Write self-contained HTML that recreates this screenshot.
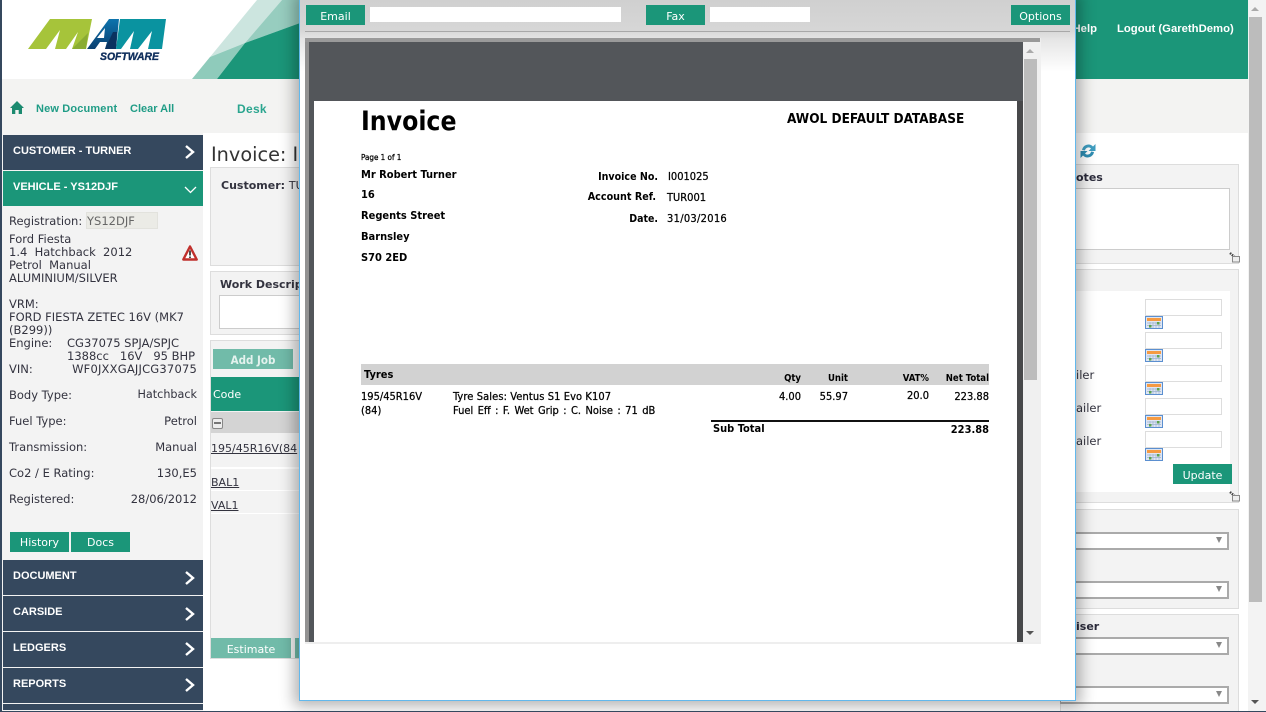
<!DOCTYPE html>
<html><head><meta charset="utf-8"><title>Invoice</title>
<style>
html,body{margin:0;padding:0;width:1266px;height:712px;overflow:hidden;background:#fff}
body{position:relative;font-family:"DejaVu Sans","Liberation Sans",sans-serif;font-size:11.5px;color:#33333f}
.a,.t{position:absolute}
.t{white-space:nowrap;line-height:14px;margin-top:1px}
.nav{position:absolute;left:3px;width:200px;height:35px;background:#35485e}
.nl{position:absolute;left:10px;font:bold 11px/14px "Liberation Sans",sans-serif;color:#fff;white-space:nowrap}
.btn{position:absolute;background:#1b9679;color:#fff;text-align:center;font-size:11px;line-height:22px;height:20px;overflow:hidden}
.r{position:absolute;background:#fff;border:1px solid #ddd;box-sizing:border-box}
.i{font-family:"DejaVu Sans Condensed","DejaVu Sans",sans-serif;font-weight:bold;color:#000;position:absolute;white-space:nowrap;line-height:14px;font-size:11px;margin-top:1px}
.n{font-weight:normal;-webkit-text-stroke:.25px #000}
.sel{position:absolute;left:1060px;width:169px;height:18px;background:#fff;border:1px solid #aaa;border-width:2px 2px 2px 1px;box-sizing:border-box}
.sel:after{content:"";position:absolute;right:5px;top:3px;border:3.5px solid transparent;border-top:6px solid #888}
u{text-decoration:underline}
</style></head><body>

<!-- header -->
<div class="a" style="left:0;top:0;width:1248px;height:79px;background:#fff"></div>
<svg class="a" style="left:0;top:0" width="1248" height="80">
<defs><linearGradient id="bl" x1="0" y1="0" x2="0" y2="1"><stop offset="0" stop-color="#0d74ad"/><stop offset="1" stop-color="#0a3f70"/></linearGradient></defs>
<polygon points="210,57 257,0 282,0 245,43" fill="#cce5df"/>
<polygon points="245,43 282,0 300,0 300,23" fill="#97cdbf"/>
<polygon points="192,79 210,57 245,43 217,79" fill="#8fcbbb"/>
<polygon points="217,79 245,43 300,23 300,79" fill="#1b9679"/>
<rect x="300" y="0" width="948" height="79" fill="#1b9679"/>
<!-- logo -->
<polygon points="28,49 50,19 92,19 86,49 72,49 78,32 66,49 55,49 60,30 46,49" fill="#a6c43a"/>
<polygon points="72,49 88,33 86,49" fill="#8aac33"/>
<polygon points="87,49 109,19 119,19 116,49 105,49 107,42 100,42 95,49" fill="url(#bl)"/>
<polygon points="97,38 105,28 104,38" fill="#fff"/>
<polygon points="105,49 113,32 117,32 116,49" fill="#0a3260"/>
<polygon points="116,49 120,19 166,19 162,49 148,49 152,31 138,49 130,49 134,31 121,49" fill="#0a93a0"/>
<text x="100" y="60" font-family="Liberation Sans" font-size="11" font-weight="bold" font-style="italic" fill="#0f2e5c" stroke="#0f2e5c" stroke-width=".35" textLength="59" lengthAdjust="spacingAndGlyphs">SOFTWARE</text>
</svg>
<div class="t" style="left:1117px;top:21px;color:#fff;font:bold 11.3px/14px 'Liberation Sans',sans-serif">Logout (GarethDemo)</div>
<div class="t" style="right:169px;top:21px;color:#fff;font:bold 11.3px/14px 'Liberation Sans',sans-serif">Help</div>

<!-- subnav -->
<div class="a" style="left:0;top:79px;width:1248px;height:54px;background:#f3f3f2"></div>
<svg class="a" style="left:10px;top:101px" width="15" height="14"><path d="M7 0 L14 7 L12 7 L12 13 L8.7 13 L8.7 9 L5.3 9 L5.3 13 L2 13 L2 7 L0 7 Z" fill="#1b8a70"/></svg>
<div class="t" style="left:36px;top:101px;color:#1f9c86;font:bold 11px/14px 'Liberation Sans',sans-serif;letter-spacing:.15px">New Document</div>
<div class="t" style="left:130px;top:101px;color:#1f9c86;font:bold 11px/14px 'Liberation Sans',sans-serif">Clear All</div>
<div class="t" style="left:237px;top:101px;color:#2aa58f;font:bold 12px/14px 'Liberation Sans',sans-serif;letter-spacing:.3px">Desk</div>

<!-- sidebar -->
<div class="a" style="left:0;top:0;width:2px;height:712px;background:#35485e;z-index:5"></div>
<div class="a" style="left:0;top:711px;width:1266px;height:1px;background:#35485e;z-index:5"></div>
<div class="a" style="left:2px;top:133px;width:201px;height:578px;background:#f3f3f3"></div>
<div class="nav" style="top:135px"><div class="nl" style="top:9px">CUSTOMER - TURNER</div></div>
<div class="nav" style="top:171px;background:#1b9679"><div class="nl" style="top:9px">VEHICLE - YS12DJF</div></div>
<div class="nav" style="top:560px"><div class="nl" style="top:9px">DOCUMENT</div></div>
<div class="nav" style="top:596px"><div class="nl" style="top:9px">CARSIDE</div></div>
<div class="nav" style="top:632px"><div class="nl" style="top:9px">LEDGERS</div></div>
<div class="nav" style="top:668px"><div class="nl" style="top:9px">REPORTS</div></div>
<div class="nav" style="top:704px;height:6px"></div>
<svg class="a" style="left:0;top:0" width="204" height="712" fill="none" stroke="#fff" stroke-width="2.4">
<path d="M186 146 L193 152 L186 158"/>
<path d="M186 572 L193 578 L186 584"/>
<path d="M186 608 L193 614 L186 620"/>
<path d="M186 643 L193 649 L186 655"/>
<path d="M186 679 L193 685 L186 691"/>
<path d="M185 187 L190.500 192.500 L196 187" stroke-width="1.300"/>
</svg>
<div class="t" style="left:9px;top:213px">Registration:</div>
<div class="a" style="left:86px;top:212px;width:72px;height:17px;background:#ebebe6;border:1px solid #e2e2dd;box-sizing:border-box;color:#666;line-height:16px;white-space:nowrap;overflow:hidden">YS12DJF</div>
<div class="t" style="left:9px;top:232px;line-height:13px">Ford Fiesta<br>1.4&nbsp; Hatchback&nbsp; 2012<br>Petrol&nbsp; Manual<br>ALUMINIUM/SILVER<br><br>VRM:<br>FORD FIESTA ZETEC 16V (MK7<br>(B299))<br>Engine:</div>
<div class="t" style="left:67px;top:336px;line-height:13px">CG37075 SPJA/SPJC<br>1388cc&nbsp;&nbsp; 16V&nbsp;&nbsp; 95 BHP</div>
<div class="t" style="left:9px;top:361px">VIN:</div><div class="t" style="right:1069px;top:361px;letter-spacing:.2px">WF0JXXGAJJCG37075</div>
<svg class="a" style="left:182px;top:245px" width="16" height="16"><path d="M8 1.500 L14.700 14.500 L1.300 14.500 Z" fill="#fff" stroke="#c0302c" stroke-width="2.400" stroke-linejoin="round"/><path d="M8 5.500 V10.500 M8 11.500 V13" stroke="#222" stroke-width="1.600"/></svg>
<div class="t" style="left:9px;top:387px">Body Type:</div><div class="t" style="right:1069px;top:387px;font-size:11.2px">Hatchback</div>
<div class="t" style="left:9px;top:413px">Fuel Type:</div><div class="t" style="right:1069px;top:413px">Petrol</div>
<div class="t" style="left:9px;top:439px">Transmission:</div><div class="t" style="right:1069px;top:439px">Manual</div>
<div class="t" style="left:9px;top:465px">Co2 / E Rating:</div><div class="t" style="right:1069px;top:465px">130,E5</div>
<div class="t" style="left:9px;top:491px">Registered:</div><div class="t" style="right:1069px;top:491px">28/06/2012</div>
<div class="btn" style="left:10px;top:532px;width:59px">History</div>
<div class="btn" style="left:71px;top:532px;width:59px">Docs</div>

<!-- centre behind modal -->
<div class="t" style="left:211px;top:144px;font-size:19.300px;line-height:20px;color:#333">Invoice: I</div>
<div class="a" style="left:210px;top:167px;width:95px;height:99px;background:#f3f3f3;border:1px solid #ddd;box-sizing:border-box"></div>
<div class="t" style="left:221px;top:178px;font-weight:bold;color:#33333f;font-size:11px">Customer: <span style="font-weight:normal">TU</span></div>
<div class="a" style="left:210px;top:271px;width:95px;height:64px;background:#f3f3f3;border:1px solid #ddd;box-sizing:border-box"></div>
<div class="t" style="left:220px;top:277px;font-weight:bold;color:#33333f;font-size:11px">Work Descrip</div>
<div class="a" style="left:219px;top:295px;width:86px;height:34px;background:#fff;border:1px solid #ccc;box-sizing:border-box"></div>
<div class="a" style="left:210px;top:340px;width:95px;height:319px;background:#f3f3f3;border:1px solid #ddd;box-sizing:border-box"></div>
<div class="btn" style="left:213px;top:349px;width:80px;background:#71bba9;font-size:11.5px;font-weight:bold;font-family:'DejaVu Sans Condensed','DejaVu Sans',sans-serif;color:#e4f2ee">Add Job</div>
<div class="a" style="left:211px;top:377px;width:94px;height:34px;background:#1b9679"></div>
<div class="t" style="left:213px;top:387px;color:#fff;font-size:11px">Code</div>
<div class="a" style="left:211px;top:412px;width:94px;height:21px;background:#d4d4d4"></div>
<div class="a" style="left:212px;top:418px;width:11px;height:11px;background:#eee;border:1px solid #888;box-sizing:border-box;border-radius:2px"><div class="a" style="left:1px;top:3px;width:7px;height:2px;background:#777"></div></div>
<div class="t" style="left:211px;top:441px;font-size:11px"><u>195/45R16V(84</u></div>
<div class="a" style="left:211px;top:467px;width:94px;height:2px;background:#fff"></div>
<div class="t" style="left:211px;top:475px;font-size:11px"><u>BAL1</u></div>
<div class="a" style="left:211px;top:490px;width:94px;height:1px;background:#fff"></div>
<div class="t" style="left:211px;top:498px;font-size:11px"><u>VAL1</u></div>
<div class="a" style="left:211px;top:513px;width:94px;height:1px;background:#fff"></div>
<div class="btn" style="left:211px;top:638px;width:80px;background:#71bba9;line-height:23px">Estimate</div>
<div class="a" style="left:295px;top:638px;width:10px;height:20px;background:#71bba9"></div>

<!-- right side behind modal -->
<svg class="a" style="left:1079px;top:142px" width="18" height="18"><path d="M3 8 A6.500 6.500 0 0 1 14 4.500 L16.500 2 L16.500 9 L9.500 9 L12 6.500 A3.500 3.500 0 0 0 6 8.500 Z" fill="#3f9dc0"/><path d="M15 10 A6.500 6.500 0 0 1 4 13.500 L1.500 16 L1.500 9 L8.500 9 L6 11.500 A3.500 3.500 0 0 0 12 9.500 Z" fill="#2f8db2"/></svg>
<div class="a" style="left:1060px;top:164px;width:179px;height:100px;background:#f3f3f3;border:1px solid #ddd;box-sizing:border-box"></div>
<div class="t" style="left:1076px;top:170px;font-weight:bold;color:#2a2a3a;font-size:11px">otes</div>
<div class="a" style="left:1060px;top:188px;width:170px;height:62px;background:#fff;border:1px solid #ccc;box-sizing:border-box"></div>
<svg class="a" style="left:1229px;top:252px" width="12" height="11"><path d="M1 1 L8 7" stroke="#444" stroke-width="2.400" stroke-dasharray="1.500 1"/><rect x="3.500" y="4.500" width="7" height="5.500" fill="#eee" stroke="#888"/></svg>
<div class="a" style="left:1060px;top:269px;width:179px;height:234px;background:#f3f3f3;border:1px solid #ddd;box-sizing:border-box"></div>
<div class="a" style="left:1060px;top:291px;width:170px;height:201px;background:#fff"></div>
<svg class="a" style="left:1229px;top:491px" width="12" height="11"><path d="M1 1 L8 7" stroke="#444" stroke-width="2.400" stroke-dasharray="1.500 1"/><rect x="3.500" y="4.500" width="7" height="5.500" fill="#eee" stroke="#888"/></svg>
<div class="r" style="left:1145px;top:299px;width:77px;height:17px"></div>
<div class="r" style="left:1145px;top:332px;width:77px;height:17px"></div>
<div class="r" style="left:1145px;top:365px;width:77px;height:17px"></div>
<div class="r" style="left:1145px;top:398px;width:77px;height:17px"></div>
<div class="r" style="left:1145px;top:431px;width:77px;height:17px"></div>
<svg class="a" style="left:1145px;top:316px" width="18" height="14"><defs><g id="c"><rect x=".5" y=".5" width="17" height="12" fill="#dfe6f2" stroke="#5b8fd0"/><rect x="2" y="2" width="14" height="3" fill="#f59a42"/><path d="M2 7 H16 M2 9.500 H16 M5 6 V12 M8 6 V12 M11 6 V12 M14 6 V12" stroke="#9db3cf" stroke-width=".7"/><rect x="4" y="9" width="2.500" height="2.500" fill="#5ca44e"/><rect x="12" y="6" width="2.500" height="2.500" fill="#5ca44e"/></g></defs><use href="#c"/></svg>
<svg class="a" style="left:1145px;top:349px" width="18" height="14"><use href="#c"/></svg>
<svg class="a" style="left:1145px;top:382px" width="18" height="14"><use href="#c"/></svg>
<svg class="a" style="left:1145px;top:415px" width="18" height="14"><use href="#c"/></svg>
<svg class="a" style="left:1145px;top:448px" width="18" height="14"><use href="#c"/></svg>
<div class="t" style="left:1076px;top:367px">iler</div>
<div class="t" style="left:1076px;top:400px">ailer</div>
<div class="t" style="left:1076px;top:433px">ailer</div>
<div class="btn" style="left:1173px;top:464px;width:59px;line-height:23px">Update</div>
<div class="a" style="left:1060px;top:509px;width:179px;height:100px;background:#f3f3f3;border:1px solid #ddd;box-sizing:border-box"></div>
<div class="sel" style="top:532px"></div><div class="sel" style="top:581px"></div>
<div class="a" style="left:1060px;top:614px;width:179px;height:98px;background:#f3f3f3;border:1px solid #ddd;box-sizing:border-box"></div>
<div class="t" style="left:1076px;top:619px;font-weight:bold;color:#2a2a3a;font-size:11px">iser</div>
<div class="sel" style="top:637px"></div><div class="sel" style="top:686px"></div>

<!-- main scrollbar -->
<div class="a" style="left:1248px;top:0;width:18px;height:711px;background:#f3f3f3"></div>
<div class="a" style="left:1249px;top:17px;width:13px;height:585px;background:#bcbcbc"></div>
<div class="a" style="left:1251px;top:7px;border:4px solid transparent;border-bottom:4px solid #aaa;border-top:0"></div>
<div class="a" style="left:1251px;top:700px;border:4px solid transparent;border-top:4px solid #555;border-bottom:0"></div>

<!-- modal -->
<div class="a" style="left:299px;top:-2px;width:777px;height:703px;background:#fff;border:1px solid #62b8ec;border-width:0 1px 1px 1px;box-sizing:border-box;box-shadow:0 0 14px 5px rgba(0,0,0,.3)"></div>
<div class="a" style="left:300px;top:0;width:775px;height:72px;background:linear-gradient(#d0d0d0,#d6d6d6 30px,#e6e6e6 40px,#fff 72px)"></div>
<div class="btn" style="left:306px;top:5px;width:59px;line-height:23px">Email</div>
<div class="a" style="left:370px;top:7px;width:251px;height:15px;background:#fff"></div>
<div class="btn" style="left:646px;top:5px;width:59px;line-height:23px">Fax</div>
<div class="a" style="left:710px;top:7px;width:100px;height:15px;background:#fff"></div>
<div class="btn" style="left:1011px;top:5px;width:59px;line-height:23px">Options</div>
<div class="a" style="left:305px;top:31px;width:765px;height:1px;background:#a8a8a8"></div>

<!-- iframe -->
<div class="a" style="left:305px;top:38px;width:736px;height:606px;background:#eee"></div>
<div class="a" style="left:305px;top:38px;width:718px;height:604px;background:#53565a"></div>
<div class="a" style="left:305px;top:38px;width:4px;height:604px;background:#929292"></div>
<div class="a" style="left:305px;top:38px;width:735px;height:4px;background:#9a9a9a"></div>
<div class="a" style="left:1023px;top:42px;width:18px;height:600px;background:#f0f0f0"></div>
<div class="a" style="left:1024px;top:59px;width:13px;height:321px;background:#bcbcbc"></div>
<div class="a" style="left:1026px;top:49px;border:4px solid transparent;border-bottom:4px solid #aaa;border-top:0"></div>
<div class="a" style="left:1026px;top:631px;border:4px solid transparent;border-top:4px solid #555;border-bottom:0"></div>
<div class="a" style="left:1017px;top:101px;width:6px;height:541px;background:#47484a"></div>
<div class="a" style="left:314px;top:101px;width:703px;height:541px;background:#fff"></div>
<div class="a" style="left:305px;top:642px;width:736px;height:2px;background:#eee"></div>

<!-- invoice -->
<div class="i" style="left:361px;top:105px;font-size:26.300px;line-height:32px;font-weight:bold">Invoice</div>
<div class="i" style="left:787px;top:111px;font-size:13.500px">AWOL DEFAULT DATABASE</div>
<div class="i n" style="left:361px;top:150px;font-size:8px">Page 1 of 1</div>
<div class="i" style="left:361px;top:167px">Mr Robert Turner</div>
<div class="i" style="left:361px;top:187px">16</div>
<div class="i" style="left:361px;top:208px">Regents Street</div>
<div class="i" style="left:361px;top:229px">Barnsley</div>
<div class="i" style="left:361px;top:250px">S70 2ED</div>
<div class="i" style="right:608px;top:169px;font-size:10.600px">Invoice&nbsp;No.</div>
<div class="i" style="right:610px;top:189px;font-size:10.700px">Account Ref.</div>
<div class="i" style="right:608px;top:211px;font-size:10.500px">Date.</div>
<div class="i n" style="left:668px;top:169px">I001025</div>
<div class="i n" style="left:667px;top:190px">TUR001</div>
<div class="i n" style="left:667px;top:211px;letter-spacing:.3px">31/03/2016</div>
<div class="a" style="left:361px;top:364px;width:628px;height:21px;background:#d2d2d2"></div>
<div class="i" style="left:364px;top:367px">Tyres</div>
<div class="i" style="right:465px;top:371px;font-size:9.500px">Qty</div>
<div class="i" style="right:418px;top:371px;font-size:9.500px">Unit</div>
<div class="i" style="right:337px;top:371px;font-size:9.500px">VAT%</div>
<div class="i" style="right:277px;top:371px;font-size:9.500px">Net Total</div>
<div class="i n" style="left:361px;top:389px">195/45R16V</div>
<div class="i n" style="left:361px;top:403px">(84)</div>
<div class="i n" style="left:453px;top:389px;letter-spacing:.1px">Tyre Sales: Ventus S1 Evo K107</div>
<div class="i n" style="left:453px;top:403px;word-spacing:1.300px">Fuel Eff : F. Wet Grip : C. Noise : 71 dB</div>
<div class="i n" style="right:465px;top:389px">4.00</div>
<div class="i n" style="right:418px;top:389px">55.97</div>
<div class="i n" style="right:337px;top:388px">20.0</div>
<div class="i n" style="right:277px;top:389px">223.88</div>
<div class="a" style="left:711px;top:420px;width:278px;height:2px;background:#111"></div>
<div class="i" style="left:713px;top:421px">Sub Total</div>
<div class="i" style="right:277px;top:422px">223.88</div>
</body></html>
